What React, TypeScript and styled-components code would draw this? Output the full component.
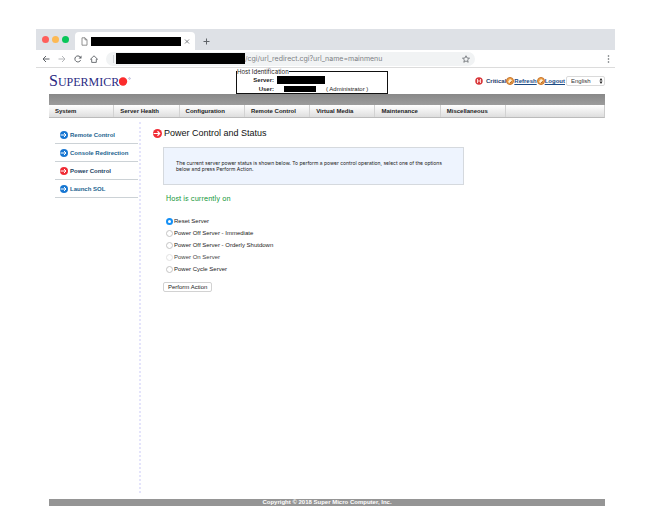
import React, { useState } from "react";
import styled, { createGlobalStyle } from "styled-components";

const GlobalStyle = createGlobalStyle`
  *, *::before, *::after { box-sizing: border-box; }
  body {
    margin: 0;
    background: #fff;
    color: #222;
    font-family: "Liberation Sans", Arial, sans-serif;
    font-size: 6px;
    line-height: 8px;
  }
  button, input, select { font: inherit; color: inherit; margin: 0; }
`;

const Page = styled.div`
  display: flex;
  flex-direction: column;
  min-height: 100vh;
  padding: 29px 33px 24px 36px;
`;

/* Browser chrome */

const TabStrip = styled.div`
  display: flex;
  align-items: flex-end;
  height: 21px;
  padding-left: 6px;
  background: #dee1e6;
`;

const WindowButtons = styled.div`
  display: flex;
  gap: 3px;
  width: 33px;
  padding-bottom: 7px;
`;

const WindowButton = styled.button<{ $color: string }>`
  width: 7px;
  height: 7px;
  padding: 0;
  border: 0;
  border-radius: 50%;
  background: ${(p) => p.$color};
`;

const Tab = styled.div`
  display: flex;
  align-items: center;
  gap: 3px;
  width: 120px;
  height: 18px;
  padding: 0 4px 0 6px;
  border-radius: 4px 4px 0 0;
  background: #fff;
`;

const Redacted = styled.span<{ $width: number; $height: number }>`
  flex: none;
  display: block;
  width: ${(p) => p.$width}px;
  height: ${(p) => p.$height}px;
  background: #000;
`;

const IconButton = styled.button`
  display: flex;
  flex: none;
  padding: 0;
  border: 0;
  background: none;
  color: #5f6368;
`;

const NewTab = styled(IconButton)`
  padding: 0 0 5px 8px;
`;

const Toolbar = styled.div`
  display: flex;
  align-items: center;
  gap: 8px;
  height: 18px;
  padding: 0 5px 0 6px;
  border-bottom: 1px solid #dcdcdc;
`;

const Address = styled.div`
  display: flex;
  align-items: center;
  flex: 0 1 369px;
  height: 14px;
  margin-right: auto;
  padding: 0 5px 0 7px;
  border-radius: 7px;
  background: #f1f3f4;
`;

const AddressDivider = styled.span`
  width: 1px;
  height: 8px;
  margin-right: 2px;
  background: #cfd1d4;
`;

const AddressInput = styled.input`
  flex: 1;
  min-width: 0;
  height: 12px;
  padding: 0;
  border: 0;
  background: none;
  color: #7d8185;
  font-family: Inter, "Liberation Sans", sans-serif;
  font-size: 7px;
`;

/* Management console */

const Console = styled.div`
  display: flex;
  flex: 1;
  flex-direction: column;
  padding: 0 10px 0 13px;
`;

const Header = styled.header`
  display: grid;
  grid-template-columns: 187px 152px 1fr;
  align-items: end;
  height: 26px;
`;

const Logo = styled.div`
  display: flex;
  align-items: baseline;
  padding-bottom: 4px;
  color: #2b2b83;
  font-family: "Liberation Serif", "Times New Roman", serif;
  font-size: 12px;
  line-height: 16px;
`;

const LogoInitial = styled.span`
  font-size: 16px;
`;

const LogoDot = styled.svg`
  flex: none;
`;

const HostBox = styled.fieldset`
  min-width: 0;
  height: 26px;
  margin: 0;
  padding: 0;
  border: 1px solid #111;
  color: #222;
`;

const HostLegend = styled.legend`
  padding: 0;
  font-family: Inter, "Liberation Sans", sans-serif;
  line-height: 7px;
`;

const HostRow = styled.div<{ $gap: number }>`
  display: grid;
  grid-template-columns: 37px auto auto 1fr;
  align-items: center;
  column-gap: ${(p) => p.$gap}px;
  height: 9px;
`;

const HostLabel = styled.b`
  text-align: right;
  width: 37px;
`;

const Actions = styled.div`
  display: flex;
  align-items: center;
  justify-self: end;
  padding-bottom: 8px;
  color: #1d3b6b;
  font-weight: bold;
`;

const Status = styled.span`
  display: flex;
  align-items: center;
  gap: 3px;
`;

const ActionLink = styled.a`
  display: flex;
  align-items: center;
  color: #1b4b85;
`;

const SelectBox = styled.label`
  position: relative;
  display: block;
  width: 39px;
  margin-left: 1px;
`;

const Language = styled.select`
  appearance: none;
  display: block;
  width: 100%;
  height: 10px;
  padding: 0 8px 0 4px;
  border: 1px solid #dadada;
  border-radius: 2px;
  background: #fff;
  color: #333;
  font-weight: normal;
  line-height: 8px;
`;

const SelectArrows = styled.svg`
  position: absolute;
  top: 2px;
  right: 2px;
  pointer-events: none;
`;

const Band = styled.div`
  height: 11px;
  background: linear-gradient(#888, #9c9c9c);
`;

const Menu = styled.nav`
  display: grid;
  grid-template-columns: repeat(7, 2fr) 3fr;
  height: 13px;
  border-right: 1px solid #ccc;
  border-bottom: 1px solid #bbb;
  background: linear-gradient(#fff, #dedede);
`;

const MenuLink = styled.a`
  padding: 0 0 0 6px;
  border-right: 1px solid #d2d2d2;
  color: #222;
  font-weight: bold;
  line-height: 12px;
  text-decoration: none;
  white-space: nowrap;
`;

const Body = styled.div`
  display: flex;
  flex: 1;
  padding: 4px 0 6px;
`;

const Sidebar = styled.nav`
  flex: none;
  width: 92px;
  padding: 4px 1px 0 6px;
  border-right: 2px dotted #e4e4fb;
`;

const SideLink = styled.a<{ $active?: boolean }>`
  display: flex;
  align-items: center;
  gap: 2px;
  height: 18px;
  padding-left: 5px;
  border-bottom: 1px solid #ccd2d6;
  color: ${(p) => (p.$active ? "#1c3f63" : "#23648f")};
  font-weight: bold;
  text-decoration: none;
`;

const Main = styled.main`
  flex: 1;
  min-width: 0;
  padding: 5px 0 0 12px;
`;

const Title = styled.h1`
  display: flex;
  align-items: center;
  gap: 2px;
  margin: 0;
  color: #111;
  font-size: 9px;
  font-weight: normal;
  line-height: 12px;
`;

const Content = styled.div`
  padding-left: 10px;
`;

const Notice = styled.p`
  max-width: 301px;
  min-height: 38px;
  margin: 8px 0 0;
  padding: 12px 12px 0;
  border: 1px solid #d5d9de;
  background: #eef4fe;
  font-family: Inter, "Liberation Sans", sans-serif;
  font-size: 5px;
  line-height: 6px;
`;

const PowerState = styled.p`
  margin: 9px 0 0 3px;
  color: #0f9535;
  font-family: Inter, "Liberation Sans", sans-serif;
  font-size: 7px;
  line-height: 10px;
`;

const PowerForm = styled.form`
  padding-top: 11px;
`;

const Choices = styled.fieldset`
  margin: 0;
  padding: 0 0 0 3px;
  border: 0;
`;

const Choice = styled.label<{ $dim?: boolean }>`
  display: flex;
  align-items: center;
  gap: 1px;
  height: 12px;
  color: ${(p) => (p.$dim ? "#444" : "#222")};
`;

const Radio = styled.input`
  appearance: none;
  width: 7px;
  height: 7px;
  border: 1px solid #c4c4c4;
  border-radius: 50%;
  background: #fff;
  &:checked { border: 2px solid #1590f5; }
  &:disabled { border-color: #e2e2e2; }
`;

const Submit = styled.button`
  display: block;
  height: 10px;
  margin-top: 7px;
  padding: 0 4px;
  border: 1px solid #d2d2d2;
  border-radius: 2px;
  background: #fff;
  line-height: 8px;
`;

const Footer = styled.footer`
  height: 7px;
  background: #959595;
  color: #fff;
  font-weight: bold;
  line-height: 7px;
  text-align: center;
`;

const ArrowIcon = ({ color, size = 8 }: { color: string; size?: number }) => (
  <svg width={size} height={size} viewBox="0 0 16 16" aria-hidden="true">
    <circle cx="8" cy="8" r="8" fill={color} />
    <path d="M1 8h11M8 4l4 4-4 4" fill="none" stroke="#fff" strokeWidth="2" />
  </svg>
);

const OrangeIcon = () => (
  <svg width="8" height="8" viewBox="0 0 16 16" aria-hidden="true">
    <circle cx="8" cy="8" r="7" fill="#f3a64b" stroke="#c4722c" strokeWidth="2" />
    <path d="M4 10l4-6 4 3-5 5z" fill="#fff3da" />
    <path d="M8 12l4-3" stroke="#a65f26" strokeWidth="2" />
  </svg>
);

const MENU = ["System", "Server Health", "Configuration", "Remote Control", "Virtual Media", "Maintenance", "Miscellaneous"];
const SIDE = ["Remote Control", "Console Redirection", "Power Control", "Launch SOL"];
const CHOICES = [
  "Reset Server",
  "Power Off Server - Immediate",
  "Power Off Server - Orderly Shutdown",
  "Power On Server",
  "Power Cycle Server",
];

export default function App() {
  const [choice, setChoice] = useState(CHOICES[0]);
  return (
    <Page>
      <GlobalStyle />
      <TabStrip>
        <WindowButtons>
          <WindowButton $color="#ff5f5b" aria-label="Close window" />
          <WindowButton $color="#fdb954" aria-label="Minimize window" />
          <WindowButton $color="#08c659" aria-label="Zoom window" />
        </WindowButtons>
        <Tab>
          <svg width="7" height="9" viewBox="0 0 7 9" fill="none" stroke="#777" aria-hidden="true">
            <path d="M1 .8h3l2 2v5.4H1zM4 .8v2h2" strokeWidth=".8" />
          </svg>
          <Redacted $width={90} $height={9} />
          <IconButton aria-label="Close tab">
            <svg width="7" height="7" viewBox="0 0 7 7" stroke="currentColor">
              <path d="M1 1.500l4 4M5 1.500l-4 4" strokeWidth=".8" />
            </svg>
          </IconButton>
        </Tab>
        <NewTab aria-label="New tab">
          <svg width="7" height="7" viewBox="0 0 7 7" stroke="currentColor">
            <path d="M3.5 .5v6M.5 3.5h6" />
          </svg>
        </NewTab>
      </TabStrip>
      <Toolbar>
        <IconButton aria-label="Back">
          <svg width="8" height="8" viewBox="0 0 8 8" fill="none" stroke="currentColor">
            <path d="M7.5 4H1M4 1L1 4l3 3" />
          </svg>
        </IconButton>
        <IconButton aria-label="Forward" disabled>
          <svg width="8" height="8" viewBox="0 0 8 8" fill="none" stroke="#b5b7ba">
            <path d="M.5 4H7M4 1l3 3-3 3" />
          </svg>
        </IconButton>
        <IconButton aria-label="Reload">
          <svg width="8" height="8" viewBox="0 0 8 8" fill="none" stroke="currentColor">
            <path d="M6.6 5.2A3 3 0 1 1 6.2 2" />
            <path d="M7.5 .5v3h-3z" fill="currentColor" stroke="none" />
          </svg>
        </IconButton>
        <IconButton aria-label="Home">
          <svg width="8" height="8" viewBox="0 0 8 8" fill="none" stroke="currentColor">
            <path d="M.5 4.2L4 .8l3.5 3.4H6.3v3.2H1.7V4.2z" strokeWidth=".9" />
          </svg>
        </IconButton>
        <Address>
          <AddressDivider />
          <Redacted $width={129} $height={11} />
          <AddressInput aria-label="Address" defaultValue="/cgi/url_redirect.cgi?url_name=mainmenu" />
          <IconButton aria-label="Bookmark this page">
            <svg width="8" height="8" viewBox="0 0 16 16" fill="none" stroke="currentColor">
              <path d="M8 1.500l2 4.500 5 .4-3.800 3.200 1.200 4.900L8 11.900l-4.400 2.600 1.200-4.900L1 6.400 6 6z" strokeWidth="1.500" />
            </svg>
          </IconButton>
        </Address>
        <IconButton aria-label="Browser menu">
          <svg width="3" height="8" viewBox="0 0 3 8" fill="currentColor">
            <circle cx="1.5" cy="1" r=".8" />
            <circle cx="1.5" cy="4" r=".8" />
            <circle cx="1.5" cy="7" r=".8" />
          </svg>
        </IconButton>
      </Toolbar>

      <Console>
        <Header>
          <Logo>
            <LogoInitial>S</LogoInitial>UPERMICR
            <LogoDot width="12" height="9" viewBox="0 0 12 9" aria-hidden="true">
              <circle cx="4" cy="4.500" r="4.200" fill="#fb2c2c" />
              <circle cx="10.500" cy="1.500" r=".8" fill="none" stroke="#8585bb" strokeWidth=".5" />
            </LogoDot>
          </Logo>
          <HostBox>
            <HostLegend>Host Identification</HostLegend>
            <HostRow $gap={3}>
              <HostLabel>Server:</HostLabel>
              <Redacted $width={48} $height={8} />
            </HostRow>
            <HostRow $gap={10}>
              <HostLabel>User:</HostLabel>
              <Redacted $width={32} $height={6} />
              <span>( Administrator )</span>
            </HostRow>
          </HostBox>
          <Actions>
            <Status>
              <svg width="8" height="8" viewBox="0 0 16 16" aria-hidden="true">
                <circle cx="8" cy="8" r="7.500" fill="#d8383b" />
                <path d="M5 4v8M11 4v8M5 8h6" stroke="#ffd6d6" strokeWidth="2" />
              </svg>
              Critical
            </Status>
            <ActionLink href="#refresh"><OrangeIcon />Refresh</ActionLink>
            <ActionLink href="#logout"><OrangeIcon />Logout</ActionLink>
            <SelectBox>
              <Language aria-label="Language">
                <option>English</option>
              </Language>
              <SelectArrows width="4" height="6" viewBox="0 0 4 6" fill="#222" aria-hidden="true">
                <path d="M2 0l1.500 2.500h-3zM2 6L.5 3.500h3z" />
              </SelectArrows>
            </SelectBox>
          </Actions>
        </Header>
        <Band />
        <Menu>
          {MENU.map((m) => (
            <MenuLink key={m} href="#menu">{m}</MenuLink>
          ))}
        </Menu>
        <Body>
          <Sidebar>
            {SIDE.map((s) => (
              <SideLink key={s} href="#side" $active={s === "Power Control"}>
                <ArrowIcon color={s === "Power Control" ? "#f02d36" : "#1877d2"} />
                {s}
              </SideLink>
            ))}
          </Sidebar>
          <Main>
            <Title><ArrowIcon color="#f02d36" size={9} />Power Control and Status</Title>
            <Content>
              <Notice>
                The current server power status is shown below. To perform a power control operation, select one of the options below and press Perform Action.
              </Notice>
              <PowerState>Host is currently on</PowerState>
              <PowerForm onSubmit={(e) => e.preventDefault()}>
                <Choices aria-label="Power action">
                  {CHOICES.map((c) => (
                    <Choice key={c} $dim={c === "Power On Server"}>
                      <Radio
                        type="radio"
                        name="power"
                        checked={choice === c}
                        disabled={c === "Power On Server"}
                        onChange={() => setChoice(c)}
                      />
                      {c}
                    </Choice>
                  ))}
                </Choices>
                <Submit type="submit">Perform Action</Submit>
              </PowerForm>
            </Content>
          </Main>
        </Body>
        <Footer>Copyright © 2018 Super Micro Computer, Inc.</Footer>
      </Console>
    </Page>
  );
}
